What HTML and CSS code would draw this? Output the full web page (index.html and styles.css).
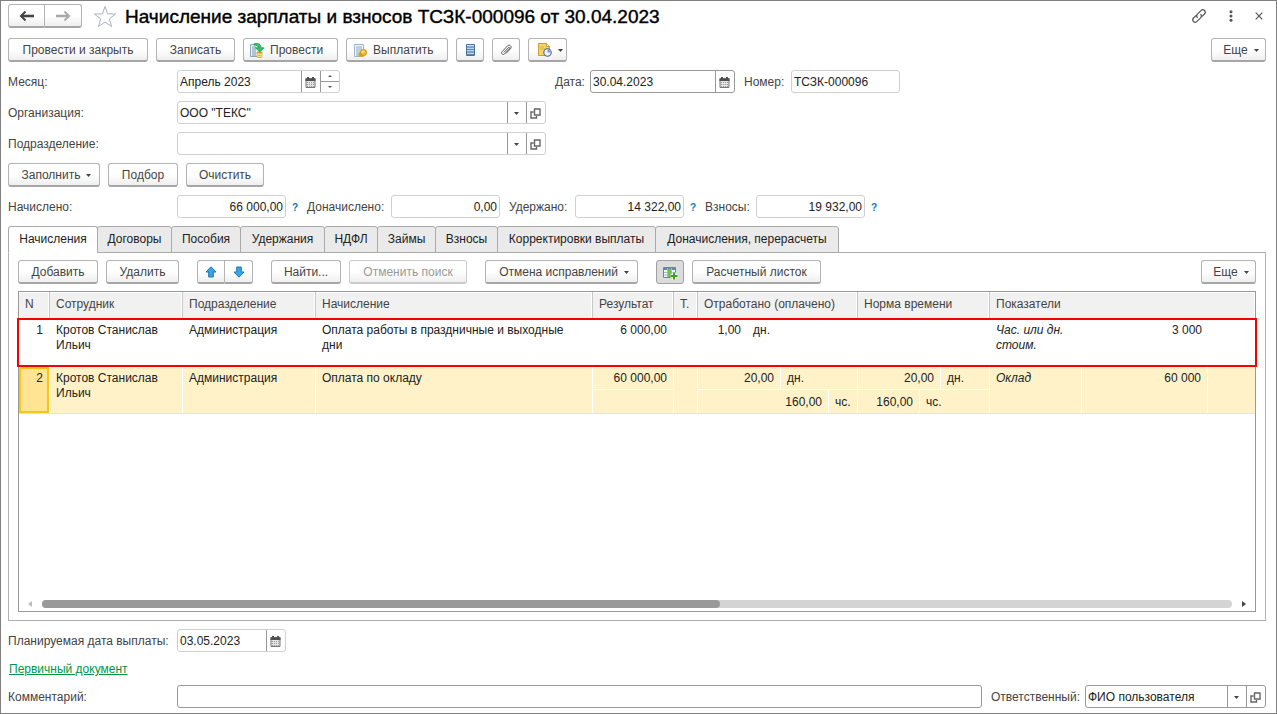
FILE: index.html
```html
<!DOCTYPE html>
<html lang="ru">
<head>
<meta charset="utf-8">
<meta name="viewport" content="width=device-width, initial-scale=1">
<title>Начисление зарплаты и взносов</title>
<link rel="stylesheet" href="styles.css">
</head>
<body>
<svg class="defs" aria-hidden="true">
  <symbol id="i-cal" viewBox="0 0 11 11">
    <path d="M1 1.500h9v9h-9z" fill="#e4e4e4" stroke="#777"/>
    <path d="M0.500 1.500h10v2.500h-10zM2 0h2v2h-2zM7 0h2v2h-2z" fill="#505050"/>
    <path d="M2 5.500h7M2 7.500h7M2 9.500h7" stroke="#999" stroke-dasharray="1 1"/>
  </symbol>
  <symbol id="i-open" viewBox="0 0 11 11">
    <path d="M4.500 1h5.500v6h-5.500zM3.500 4H1v6h5.500V8" fill="none" stroke="#666" stroke-width="1.400"/>
  </symbol>
  <symbol id="i-down" viewBox="0 0 5 3"><path d="M0 0h5L2.500 3z" fill="#444"/></symbol>
</svg>
<main class="window">
  <header class="title-row">
    <div class="pair nav">
      <button class="btn" aria-label="Назад"><svg width="16" height="10" viewBox="0 0 16 10"><path d="M2 5H15" fill="none" stroke="#444" stroke-width="2.600"/><path d="M6.500 .5L2 5l4.500 4.500" fill="none" stroke="#444" stroke-width="2"/></svg></button>
      <button class="btn" aria-label="Вперед"><svg width="16" height="10" viewBox="0 0 16 10"><path d="M1 5h13" fill="none" stroke="#aaa" stroke-width="2.600"/><path d="M9.500 .5L14 5 9.500 9.500" fill="none" stroke="#aaa" stroke-width="2"/></svg></button>
    </div>
    <button class="plain star" aria-label="В избранное"><svg width="24" height="23" viewBox="0 0 24 23"><path d="M12 1.500l2.600 7.300 8 .2-6.300 4.900 2.300 7.600-6.600-4.500-6.600 4.500 2.300-7.600L1.400 9l8-.2z" fill="#fff" stroke="#aab2bc"/></svg></button>
    <h1>Начисление зарплаты и взносов ТСЗК-000096 от 30.04.2023</h1>
    <div class="window-tools">
      <button class="plain" aria-label="Ссылка"><svg width="16" height="16" viewBox="0 0 16 16" fill="none" stroke="#555" stroke-width="1.200"><path d="M6.500 9.800C5.300 8.600 5.400 7.200 6.400 6.200L10 2.600c1.100-1.100 2.500-1 3.500-.1 1 1 1 2.400 0 3.500l-2.700 2.700M9.500 6.200c1.200 1.200 1.100 2.600.1 3.600L6 13.400c-1.100 1.100-2.500 1-3.500.1-1-1-1-2.400 0-3.500l2.700-2.700"/></svg></button>
      <button class="plain" aria-label="Меню"><svg width="4" height="12" viewBox="0 0 4 12" fill="#555"><circle cx="2" cy="1.700" r="1.500"/><circle cx="2" cy="6" r="1.500"/><circle cx="2" cy="10.300" r="1.500"/></svg></button>
      <button class="plain" aria-label="Закрыть"><svg width="8" height="8" viewBox="0 0 8 8"><path d="M.7.7l6.600 6.600M7.300.7L.7 7.300" stroke="#555" stroke-width="1.200"/></svg></button>
    </div>
  </header>

  <div class="bar">
    <button class="btn w140">Провести и закрыть</button>
    <button class="btn w79">Записать</button>
    <button class="btn w95 with-icon"><svg width="15" height="15" viewBox="0 0 15 15"><path d="M.5 1.500h9v12h-9z" fill="#eef4fa" stroke="#8aa4bd"/><path d="M2 4h4M2 6h4M2 8h4M2 10h4M2 12h4" stroke="#7793ad"/><path d="M7 9h5v5q-2.500 1.500-5 0z" fill="#e7b52c" stroke="#b98913" stroke-width=".6"/><path d="M7 11q2.500 1 5 0M7 13q2.500 1 5 0" stroke="#fff0a8" fill="none"/><path d="M4 .8c5-1 7 .5 7 4h3L9.800 9 5.500 4.800h2.700C8 3 6.500 1.800 4 2.200z" fill="#2fc45c" stroke="#0d9b3f" stroke-width=".7"/></svg>Провести</button>
    <button class="btn w102 with-icon"><svg width="15" height="15" viewBox="0 0 15 15"><path d="M1.500 1.500h9v12h-9z" fill="#f0f6fb" stroke="#9ab5cd"/><path d="M3 4h6M3 6h6M3 8h6M3 10h4M3 12h3" stroke="#8aa8c2"/><circle cx="8" cy="11.500" r="2.600" fill="#e0a41c"/><circle cx="10.500" cy="9.500" r="3.200" fill="#edb52b" stroke="#bd8310" stroke-width=".6"/><circle cx="10" cy="8.800" r="1.500" fill="#ffe06d"/></svg>Выплатить</button>
    <button class="btn w28" aria-label="Реестр"><svg width="9" height="12" viewBox="0 0 9 12"><path d="M.5.500h8v11h-8z" fill="#dbe9f4" stroke="#46749b"/><path d="M1 3h7M1 5.500h7M1 8h7M1 10.300h7" stroke="#5d8cb2" stroke-width="1.300"/></svg></button>
    <button class="btn w28" aria-label="Файлы"><svg width="12" height="12" viewBox="0 0 12 12"><path d="M4 8.300L8.300 3.700c.9-.9 2 .2 1.200 1.100L4.600 9.900C3.200 11.500.6 9.700 2 7.800L7.600 1.800c1.700-1.700 4.700.5 3 2.700L6.200 9.300" fill="none" stroke="#555"/></svg></button>
    <button class="btn w39 gap6" aria-label="Печать"><svg width="14" height="14" viewBox="0 0 14 14"><path d="M.5.500h8l3 3v9h-11z" fill="#f3d36c" stroke="#c9a134"/><path d="M8.500.500v3h3" fill="#fff0b5" stroke="#c9a134"/><path d="M2 4h4M2 6h7" stroke="#d9b44b"/><circle cx="9.500" cy="9.500" r="3.700" fill="#edf3fb" stroke="#4e6685" stroke-width="1.100"/><path d="M9.500 9.500V6.300a3.200 3.200 0 0 1 3 3.200z" fill="#8795d9"/></svg><svg width="5" height="3"><use href="#i-down"/></svg></button>
    <button class="btn w55 gap6 push">Еще<svg width="5" height="3"><use href="#i-down"/></svg></button>
  </div>

  <div class="form-row">
    <label class="lead" for="month">Месяц:</label>
    <div class="month-cell">
      <div class="field w163"><input id="month" value="Апрель 2023"><button class="addon" aria-label="Выбрать месяц"><svg width="11" height="11"><use href="#i-cal"/></svg></button><div class="spin"><button aria-label="Больше"><svg width="4" height="2"><path d="M0 2h4L2 0z" fill="#555"/></svg></button><button aria-label="Меньше"><svg width="4" height="2"><path d="M0 0h4L2 2z" fill="#555"/></svg></button></div></div>
    </div>
    <label class="w30" for="date">Дата:</label>
    <div class="field strong w145"><input id="date" value="30.04.2023"><button class="addon" aria-label="Выбрать дату"><svg width="11" height="11"><use href="#i-cal"/></svg></button></div>
    <label class="next w42" for="number">Номер:</label>
    <div class="field w109"><input id="number" value="ТСЗК-000096"></div>
  </div>
  <div class="form-row">
    <label class="lead" for="org">Организация:</label>
    <div class="field w369"><div class="choice"><select id="org"><option>ООО "ТЕКС"</option></select><svg width="5" height="3"><use href="#i-down"/></svg></div><button class="addon" aria-label="Открыть организацию"><svg width="11" height="11"><use href="#i-open"/></svg></button></div>
  </div>
  <div class="form-row">
    <label class="lead" for="dept">Подразделение:</label>
    <div class="field w369"><div class="choice"><select id="dept"><option></option></select><svg width="5" height="3"><use href="#i-down"/></svg></div><button class="addon" aria-label="Открыть подразделение"><svg width="11" height="11"><use href="#i-open"/></svg></button></div>
  </div>

  <div class="bar after-form">
    <button class="btn w92 gap6">Заполнить<svg width="5" height="3"><use href="#i-down"/></svg></button>
    <button class="btn w70">Подбор</button>
    <button class="btn w78">Очистить</button>
  </div>

  <div class="form-row">
    <label class="lead" for="t1">Начислено:</label>
    <div class="field w109"><input class="num" id="t1" value="66 000,00"></div><button class="help">?</button>
    <label class="w79" for="t2">Доначислено:</label>
    <div class="field w109"><input class="num" id="t2" value="0,00"></div>
    <label class="next w61" for="t3">Удержано:</label>
    <div class="field w109"><input class="num" id="t3" value="14 322,00"></div><button class="help">?</button>
    <label class="w46" for="t4">Взносы:</label>
    <div class="field w109"><input class="num" id="t4" value="19 932,00"></div><button class="help">?</button>
  </div>

  <div class="tabs" role="tablist">
    <button class="tab w90 active" role="tab" aria-selected="true">Начисления</button>
    <button class="tab w75" role="tab">Договоры</button>
    <button class="tab w70" role="tab">Пособия</button>
    <button class="tab w85" role="tab">Удержания</button>
    <button class="tab w54" role="tab">НДФЛ</button>
    <button class="tab w59" role="tab">Займы</button>
    <button class="tab w63" role="tab">Взносы</button>
    <button class="tab w159" role="tab">Корректировки выплаты</button>
    <button class="tab w184" role="tab">Доначисления, перерасчеты</button>
  </div>

  <section class="panel">
    <div class="bar panel-bar">
      <button class="btn w80">Добавить</button>
      <button class="btn w73">Удалить</button>
      <div class="pair group">
        <button class="btn" aria-label="Вверх"><svg width="12" height="12" viewBox="0 0 12 12"><path d="M6 .8l5 5.200H8.300v5H3.700V6H1z" fill="#35a7e8" stroke="#2277ae"/></svg></button>
        <button class="btn" aria-label="Вниз"><svg width="12" height="12" viewBox="0 0 12 12"><path d="M6 11.200L1 6h2.700V1h4.600v5H11z" fill="#35a7e8" stroke="#2277ae"/></svg></button>
      </div>
      <button class="btn w70 group">Найти...</button>
      <button class="btn w118" disabled>Отменить поиск</button>
      <button class="btn w153 gap6 group">Отмена исправлений<svg width="5" height="3"><use href="#i-down"/></svg></button>
      <button class="btn w28 group pressed" aria-label="Добавить колонки"><svg width="15" height="14" viewBox="0 0 15 14"><path d="M.5 1.500h12v10h-12z" fill="#f4f8fb" stroke="#6687a3"/><path d="M1 3h11" stroke="#6687a3" stroke-width="2"/><path d="M4.500 2v9M8.500 2v9M1 6.500h11M1 9h11" stroke="#a0b8ca"/><path d="M5 3h3v8h-3z" fill="#75bd4d"/><path d="M11 6.500v7M7.500 10h7" stroke="#fff" stroke-width="3.500"/><path d="M11 6.500v7M7.500 10h7" stroke="#36a51d" stroke-width="2"/></svg></button>
      <button class="btn w129">Расчетный листок</button>
      <button class="btn w55 gap6 push">Еще<svg width="5" height="3"><use href="#i-down"/></svg></button>
    </div>

    <div class="grid-box">
      <table>
        <colgroup><col class="c-n"><col class="c-name"><col class="c-name"><col class="c-calc"><col class="c-sum"><col class="c-t"><col class="c-work"><col class="c-norm"><col></colgroup>
        <thead><tr><th>N</th><th>Сотрудник</th><th>Подразделение</th><th>Начисление</th><th>Результат</th><th>Т.</th><th>Отработано (оплачено)</th><th>Норма времени</th><th>Показатели</th></tr></thead>
        <tbody>
          <tr class="marked"><td class="right">1</td><td>Кротов Станислав Ильич</td><td>Администрация</td><td>Оплата работы в праздничные и выходные дни</td><td class="right">6 000,00</td><td></td>
            <td class="split"><div class="line"><span class="v48">1,00</span><span class="unit">дн.</span></div></td><td></td>
            <td class="split"><div class="line"><span class="ind">Час. или дн. стоим.</span><span class="v126">3 000</span></div></td></tr>
          <tr class="current"><td class="right cursor">2</td><td>Кротов Станислав Ильич</td><td>Администрация</td><td>Оплата по окладу</td>
            <td class="split"><div class="line"><span class="fill">60 000,00</span></div><div class="line"></div></td><td></td>
            <td class="split"><div class="line"><span class="v83">20,00</span><span class="unit">дн.</span></div><div class="line"><span class="v131">160,00</span><span class="unit">чс.</span></div></td>
            <td class="split"><div class="line"><span class="v83">20,00</span><span class="unit">дн.</span></div><div class="line"><span class="v62">160,00</span><span class="unit">чс.</span></div></td>
            <td class="split"><div class="line whole"><span class="ind">Оклад</span><span class="v126">60 000</span></div></td></tr>
        </tbody>
      </table>
      <div class="scroll">
        <svg width="4" height="6"><path d="M4 0v6L0 3z" fill="#bbb"/></svg>
        <div class="track"><div class="thumb"></div></div>
        <svg width="4" height="6"><path d="M0 0v6l4-3z" fill="#444"/></svg>
      </div>
    </div>
  </section>

  <div class="form-row">
    <label class="lead" for="plan">Планируемая дата выплаты:</label>
    <div class="field w109"><input id="plan" value="03.05.2023"><button class="addon" aria-label="Выбрать дату выплаты"><svg width="11" height="11"><use href="#i-cal"/></svg></button></div>
  </div>
  <div class="link-row"><a href="#">Первичный документ</a></div>
  <div class="form-row">
    <label class="lead" for="comment">Комментарий:</label>
    <div class="field strong grow"><input id="comment"></div>
    <label class="next w89" for="resp">Ответственный:</label>
    <div class="field strong w181"><div class="choice"><select id="resp"><option>ФИО пользователя</option></select><svg width="5" height="3"><use href="#i-down"/></svg></div><button class="addon" aria-label="Открыть ответственного"><svg width="11" height="11"><use href="#i-open"/></svg></button></div>
  </div>
</main>
</body>
</html>
```
FILE: styles.css
```css
* { box-sizing: border-box; }
body { margin: 0; background: #fff; color: #444; font: 12px/15px "Liberation Sans", Arial, sans-serif; }
button, input, select { font: inherit; color: inherit; margin: 0; }
svg { display: block; flex: none; }
.defs { position: absolute; width: 0; height: 0; }

.window { display: flex; flex-direction: column; min-height: 100vh; padding: 3px 10px 5px 7px; border: 1px solid #808080; }

.title-row { display: flex; align-items: center; height: 24px; margin-bottom: 10px; }
h1 { margin: 0 0 0 8px; padding-top: 1px; font-size: 19px; line-height: 24px; font-weight: 400; color: #000; white-space: nowrap; -webkit-text-stroke: 0.4px #000; }
.plain { padding: 0; border: 0; background: none; }
.star { margin-left: 11px; }
.window-tools { display: flex; align-items: center; gap: 22px; margin-left: auto; margin-right: 3px; }

.bar { display: flex; gap: 8px; }
.btn { display: flex; align-items: center; justify-content: center; height: 24px; padding: 1px 0 0; border: 1px solid #b3b3b3; border-bottom: 2px solid #a6a6a6; border-radius: 3px; background: linear-gradient(#fff 50%, #efefef); white-space: nowrap; }
.btn:disabled { color: #999; border-color: #ccc; }
.pressed { background: #dcdcdc; border: 1px solid #a0a0a0; }
.with-icon { justify-content: flex-start; gap: 5px; padding-left: 6px; }
.gap6 { gap: 6px; padding-left: 5px; }
.push { margin-left: auto; }
.group { margin-left: 10px; }
.pair { display: flex; }
.pair .btn { width: 28px; }
.pair .btn:first-child { border-radius: 3px 0 0 3px; }
.pair .btn:last-child { border-radius: 0 3px 3px 0; border-left: 0; }
.nav .btn { width: 37px; }

.form-row { display: flex; align-items: center; margin-top: 8px; white-space: nowrap; }
.form-row label { padding-top: 2px; }
.after-form { margin-top: 8px; }
.lead { flex: none; width: 169px; }
.month-cell { width: 378px; }
.form-row label + .field { margin-left: 5px; }
.form-row .lead + .field { margin-left: 0; }
.next { margin-left: 9px; }

.field { display: flex; height: 23px; border: 1px solid #d0d0d0; border-radius: 3px; background: #fff; color: #222; }
.strong { border-color: #999; }
.field input, .field select { flex: 1; min-width: 0; width: 100%; height: 21px; padding: 1px 2px 0; border: 0; outline: 0; background: none; }
.field .num { text-align: right; }
.field select { appearance: none; }
.choice { position: relative; display: flex; flex: 1; background: linear-gradient(#999, #999) right 18px top / 1px 100% no-repeat; }
.choice svg { position: absolute; right: 7px; top: 10px; pointer-events: none; }
.addon { display: flex; align-items: center; justify-content: center; flex: none; width: 19px; padding: 2px 1px 0 0; border: 0; border-left: 1px solid #999; background: none; }
.spin { display: flex; flex-direction: column; width: 19px; border-left: 1px solid #999; }
.spin button { display: flex; flex: 1; align-items: center; justify-content: center; padding: 0; border: 0; background: none; }
.spin button + button { border-top: 1px solid #999; }
.help { width: 21px; padding: 2px 3px 0 0; border: 0; background: none; color: #0a7ac2; font-size: 10px; font-weight: 700; text-align: center; }
.grow { flex: 1; }

.tabs { display: flex; margin-top: 8px; }
.tab { position: relative; z-index: 1; height: 27px; margin-right: -1px; padding: 0; border: 1px solid #aaa; border-radius: 3px 3px 0 0; background: #eaeaea; color: #222; white-space: nowrap; }
.tab.active { border-bottom-color: #fff; background: #fff; }
.tabs + .panel { margin-top: -1px; }

.panel { display: flex; flex: 1; flex-direction: column; padding: 7px 9px 8px; border: 1px solid #b0b0b0; }
.panel-bar { margin-bottom: 7px; }
.grid-box { display: flex; flex: 1; flex-direction: column; justify-content: space-between; border: 1px solid #999; }
table { width: 100%; table-layout: fixed; border-spacing: 0; color: #222; }
th { height: 28px; padding: 0 6px 4px; border: 1px solid #c8c8c8; border-width: 0 1px 0 0; background: #f1f1f1; box-shadow: inset -1px 1px #fff; color: #444; font-weight: 400; text-align: left; white-space: nowrap; }
th:last-child { border-right: 0; }
td { padding: 3px 6px 0; vertical-align: top; }
.c-n { width: 31px; }
.c-name { width: 133px; }
.c-calc { width: 277px; }
.c-sum { width: 81px; }
.c-t { width: 24px; }
.c-work { width: 160px; }
.c-norm { width: 132px; }
.right { text-align: right; }
.marked { outline: 2px solid #f40000; }
.marked td { height: 45px; }
.marked .right { padding-right: 7px; }
.current td { height: 48px; padding-top: 6px; border-right: 1px solid #fff; background: #fff2c8; background-clip: padding-box; }
.current td:last-child { border-right: 0; }
td.split, .current td.split { padding: 0; }
.current .cursor { background: #ffe494; box-shadow: inset 0 -2px #fcc419, inset 2px 0 #fcc419, inset -2px 0 #fcc419, inset 0 4px #fcc419; }
.line { display: flex; }
.line span { flex: none; padding: 3px 6px 0; }
.line .fill { flex: 1; text-align: right; }
.current .line { height: 24px; }
.current .line + .line { border-top: 1px solid #fff; }
.current .line span { padding-top: 6px; }
.current .line + .line span { padding-top: 5px; }
.current .whole { height: 48px; }
.current [class^="v"], .current .ind { border-right: 1px solid #fff; }
.line [class^="v"] { text-align: right; }
.v48 { width: 49px; }
.v62 { width: 62px; }
.v83 { width: 83px; }
.v126 { width: 126px; }
.v131 { width: 131px; }
.ind { width: 92px; font-style: italic; }
.current { box-shadow: 0 1px #e3e3e3; }

.scroll { display: flex; align-items: center; gap: 10px; margin-bottom: 3px; padding: 0 9px; }
.track { flex: 1; height: 8px; border-radius: 4px; background: #d4d4d4; }
.thumb { width: 57%; height: 8px; border-radius: 4px; background: #999; }

.link-row { margin: 10px 0 0 1px; }
a { color: #009646; }

.w28 { width: 28px; }
.w30 { width: 30px; }
.w39 { width: 39px; }
.w42 { width: 42px; }
.w46 { width: 46px; }
.w54 { width: 54px; }
.w55 { width: 55px; }
.w59 { width: 59px; }
.w61 { width: 61px; }
.w63 { width: 63px; }
.w70 { width: 70px; }
.w73 { width: 73px; }
.w75 { width: 75px; }
.w78 { width: 78px; }
.w79 { width: 79px; }
.w80 { width: 80px; }
.w85 { width: 85px; }
.w89 { width: 89px; }
.w90 { width: 90px; }
.w92 { width: 92px; }
.w95 { width: 95px; }
.w102 { width: 102px; }
.w109 { width: 109px; }
.w118 { width: 118px; }
.w129 { width: 129px; }
.w140 { width: 140px; }
.w145 { width: 145px; }
.w153 { width: 153px; }
.w159 { width: 159px; }
.w163 { width: 163px; }
.w181 { width: 181px; }
.w184 { width: 184px; }
.w369 { width: 369px; }
```
